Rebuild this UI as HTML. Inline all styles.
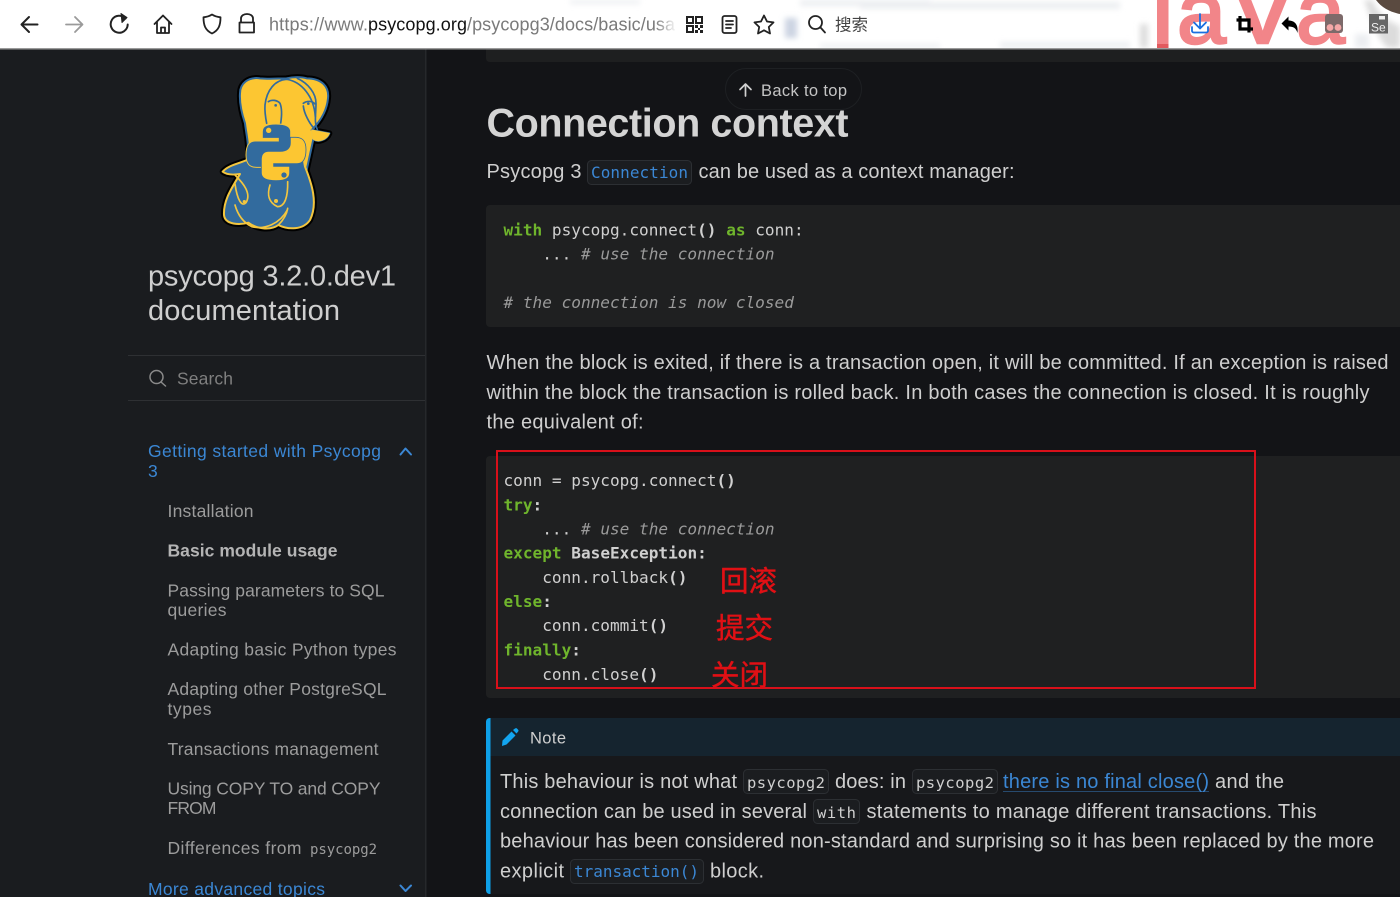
<!DOCTYPE html>
<html lang="en"><head><meta charset="utf-8"><title>Connection context</title>
<style>
html,body{margin:0;padding:0;width:1400px;height:897px;overflow:hidden;background:#131417}
svg{display:block}
text{white-space:pre;font-family:"Liberation Sans","Noto Sans CJK SC",sans-serif}
.m{font-family:"DejaVu Sans Mono",monospace;font-size:16.08px;fill:#d0d0d0}
.k{font-weight:bold;fill:#6fb52c}
.c{font-style:italic;fill:#9a9a9a}
.b{font-size:20px;fill:#cfcfcf}
.n{font-size:17.5px;fill:#9c9c9c}
.l{font-size:17.5px;fill:#3b87d4}
.r{font-size:28.5px;fill:#e01015;stroke:#e01015;stroke-width:.45}
.j{fill:#f28589;stroke:#f28589;stroke-width:2.5}
</style></head><body>
<svg xmlns="http://www.w3.org/2000/svg" width="1400" height="897" viewBox="0 0 1400 897">
<defs>
<linearGradient id="fade" x1="0" x2="1"><stop offset="0" stop-color="#fff" stop-opacity="0"/><stop offset="1" stop-color="#fff"/></linearGradient>
<filter id="bl"><feGaussianBlur stdDeviation="3"/></filter>
<clipPath id="tb"><rect width="1400" height="48"/></clipPath>
</defs>
<!-- toolbar -->
<rect width="1400" height="48" fill="#fff"/>
<g clip-path="url(#tb)">
<g filter="url(#bl)" fill="#eceef1">
<rect x="800" y="0" width="130" height="6"/><rect x="860" y="2" width="260" height="7"/><rect x="570" y="0" width="70" height="4"/><rect x="785" y="18" width="12" height="20" fill="#ccd4e2"/><rect x="1140" y="24" width="8" height="24" fill="#ddd"/><rect x="1000" y="42" width="130" height="6"/><rect x="820" y="44" width="120" height="4"/><rect x="1355" y="34" width="14" height="14"/>
</g>
<path d="M1372 0C1378 14 1388 22 1400 26V48H1388C1378 40 1372 20 1364 0Z" fill="#dcdcdc" filter="url(#bl)"/>
<path d="M1376 0C1382 8 1390 12 1400 14V0Z" fill="#5a4a40"/>
<rect x="1157" y="0" width="11.500" height="48" class="j" style="stroke:none"/>
<rect x="1157" y="44" width="11.500" height="4" fill="#e25a5e"/>
<text x="1177" y="43" font-size="88" class="j">a</text>
<text x="1228" y="43" font-size="104" class="j">V</text>
<text x="1296" y="43" font-size="88" class="j">a</text>
</g>
<rect y="48" width="1400" height="1.5" fill="#9a9a9a"/>
<!-- nav icons -->
<g fill="none" stroke="#222" stroke-width="1.8" stroke-linecap="round" stroke-linejoin="round">
<path d="M37.500 24.500H22M29 17L21.500 24.500L29 32" stroke-width="2"/>
<path d="M66 24.500H82M75 17L82.500 24.500L75 32" stroke="#9a9a9a"/>
<path d="M125.500 18.500A8.500 8.500 0 1 0 127.700 24.500" stroke-width="2"/>
<path d="M121 13.500L127 17.500L122 22.500Z" fill="#222" stroke-width="1"/>
<path d="M154.500 24L163 15.500L171.500 24M157 22V33H169V22M161 33V27.500H165V33"/>
<path d="M212 14.500C215 16.500 218 17 220.500 17.300C220.500 25 219 30 212 33.500C205 30 203.500 25 203.500 17.300C206 17 209 16.500 212 14.500Z"/>
<path d="M241 22.500V18.500C241 12.500 253 12.500 253 18.500V22.500M239.500 22.500H254V32.500H239.500Z"/>
</g>
<text x="269" y="30.500" font-size="18" fill="#7a7a7a" textLength="99">https://www.</text>
<text x="368" y="30.500" font-size="18" fill="#111" textLength="99">psycopg.org</text>
<text x="467" y="30.500" font-size="18" fill="#7a7a7a" textLength="208">/psycopg3/docs/basic/usa</text>
<rect x="655" y="10" width="22" height="30" fill="url(#fade)"/>
<rect x="677" y="10" width="78" height="30" fill="#fff"/>
<!-- QR -->
<g fill="#222">
<path d="M686 16h8v8h-8zM688 18v4h4v-4zM695 16h8v8h-8zM697 18v4h4v-4zM686 25h8v8h-8zM688 27v4h4v-4z" fill-rule="evenodd"/>
<path d="M695 25h3v3h-3zM700 25h3v3h-3zM698 28h2v2h-2zM695 30h3v3h-3zM700 30h3v3h-3z"/>
</g>
<g fill="none" stroke="#222" stroke-width="1.800" stroke-linecap="round" stroke-linejoin="round">
<rect x="722.500" y="16" width="14" height="17" rx="2"/>
<path d="M726 21H733M726 24.500H733M726 28H731"/>
<path d="M764 15.500L767 21.500L773.500 22.400L768.800 27L770 33.500L764 30.300L758 33.500L759.200 27L754.500 22.400L761 21.500Z"/>
<circle cx="815.500" cy="22.500" r="6.500"/>
<path d="M820.500 27.500L825 32.500"/>
</g>
<text x="835" y="30.500" font-size="16.500" fill="#444">搜索</text>
<!-- right icons -->
<path d="M1200 14V28M1194 22.500L1200 28.500L1206 22.500M1192 27V31C1192 32 1193 32.500 1194 32.500H1206C1207 32.500 1208 32 1208 31V27" fill="none" stroke="#1a6fe0" stroke-width="1.800" stroke-linecap="round" stroke-linejoin="round"/>
<path d="M1240 16V29H1253M1236.500 20H1249V32.500" fill="none" stroke="#000" stroke-width="3.200"/>
<path d="M1281.500 23.500L1288.500 16.500V20.500C1295 20.500 1298.500 25 1297.500 33C1296 28 1293.500 26.500 1288.500 26.500V30.500Z" fill="#000"/>
<rect x="1325" y="14" width="18" height="19" rx="3" fill="#7d6a6a"/>
<circle cx="1330" cy="27.500" r="3.400" fill="#f4a8a8"/><circle cx="1338" cy="27.500" r="3.400" fill="#f4a8a8"/>
<rect x="1369" y="14" width="19" height="19.500" fill="#666"/>
<rect x="1379" y="16" width="6" height="3.500" fill="#eee"/>
<text x="1371" y="31.500" font-size="12" fill="#eee">Se</text>
<!-- page -->
<rect y="49.500" width="1400" height="848" fill="#131417"/>
<rect y="49.500" width="425" height="848" fill="#1a1c1f"/>
<rect x="425" y="49.500" width="1.500" height="848" fill="#26282b"/>
<!-- logo -->
<g transform="translate(190 60) scale(.33333)">
<g fill="#000" stroke="#000" stroke-width="18" stroke-linejoin="round">
<path d="M150 100C150 70 175 50 210 55C240 58 265 55 290 55C310 50 335 50 350 55C395 55 418 80 414 115C410 160 385 190 365 210L418 220C410 240 385 248 370 238L350 330L175 300C175 240 170 230 165 190C155 160 148 130 150 100Z"/>
<path d="M170 300C150 310 115 315 98 335C110 345 130 345 150 342C125 385 100 420 102 465C105 495 150 495 175 488C205 510 245 510 265 495C295 510 340 510 360 480C385 430 365 370 345 320L340 290Z"/>
</g>
<path d="M150 100C150 70 175 50 210 55C240 58 265 55 290 55C310 50 335 50 350 55C395 55 418 80 414 115C410 160 385 190 365 210L418 220C410 240 385 248 370 238L350 330L175 300C175 240 170 230 165 190C155 160 148 130 150 100Z" fill="#fcc632" stroke="#326b9e" stroke-width="6" stroke-linejoin="round"/>
<path d="M170 300C150 310 115 315 98 335C110 345 130 345 150 342C125 385 100 420 102 465C105 495 150 495 175 488C205 510 245 510 265 495C295 510 340 510 360 480C385 430 365 370 345 320L340 290Z" fill="#326b9e" stroke="#f3c63f" stroke-width="6" stroke-linejoin="round"/>
<path d="M365 210L418 220C410 240 385 248 370 238C366 230 364 220 365 210Z" fill="#fcc632" stroke="#f3c63f" stroke-width="3"/>
<g fill="none" stroke="#326b9e" stroke-width="5" stroke-linecap="round" stroke-linejoin="round">
<path d="M230 190C225 165 224 150 225 135C230 90 255 60 290 58C335 65 372 110 376 170"/>
<path d="M322 55C355 70 378 100 378 130C378 160 372 190 382 208"/>
<path d="M235 125C245 118 262 120 270 130C276 145 276 165 272 190"/>
<path d="M340 130C350 122 368 122 375 132M340 138C342 160 358 190 372 205"/>
</g>
<g fill="none" stroke="#f3c63f" stroke-width="5" stroke-linecap="round" stroke-linejoin="round">
<path d="M135 345C160 370 185 400 168 428C155 442 142 420 135 372"/>
<path d="M135 435C145 470 165 490 185 500C225 510 270 490 292 450"/>
<path d="M240 375C232 400 232 425 262 440C285 440 294 410 293 365"/>
<path d="M265 495C280 480 290 465 293 445"/>
</g>
<circle cx="163" cy="425" r="5" fill="#f3c63f"/><circle cx="258" cy="423" r="6" fill="#f3c63f"/>
<circle cx="257" cy="136" r="4" fill="#326b9e"/><circle cx="355" cy="131" r="4" fill="#326b9e"/>
<path d="M258 192C225 192 217 202 217 215V235H265V243H195C175 243 168 260 168 285C168 313 180 322 200 322H215V305C215 290 225 280 245 280H280C295 280 302 270 302 255V215C302 202 290 192 258 192Z" fill="#326b9e" stroke="#f3c63f" stroke-width="3"/>
<path d="M258 192C225 192 217 202 217 215V235H265V243H195C175 243 168 260 168 285C168 313 180 322 200 322H215V305C215 290 225 280 245 280H280C295 280 302 270 302 255V215C302 202 290 192 258 192Z" fill="#fcc632" stroke="#326b9e" stroke-width="2.500" transform="rotate(180 258 277)"/>
<circle cx="236" cy="211" r="8" fill="#fcc632"/><circle cx="282" cy="345" r="8" fill="#326b9e"/>
</g>
<!-- sidebar -->
<text x="148" y="285.500" font-size="29" fill="#cfcfcf" textLength="248">psycopg 3.2.0.dev1</text>
<text x="148" y="320" font-size="29" fill="#cfcfcf" textLength="192">documentation</text>
<rect x="128" y="355" width="297" height="1" fill="#2e3033"/>
<rect x="128" y="400" width="297" height="1" fill="#2e3033"/>
<g fill="none" stroke="#8a8a8a" stroke-width="1.500" stroke-linecap="round"><circle cx="156.500" cy="377" r="6.500"/><path d="M161 382L165.500 386"/></g>
<text x="177" y="384.500" font-size="17.500" fill="#7f7f7f" textLength="56">Search</text>
<text x="148" y="457" class="l" textLength="233">Getting started with Psycopg</text>
<text x="148" y="477" class="l" textLength="10">3</text>
<path d="M400.500 454.500L405.500 448.500L411 454.500" fill="none" stroke="#3b87d4" stroke-width="2" stroke-linecap="round" stroke-linejoin="round"/>
<text x="167.500" y="517" class="n" textLength="86">Installation</text>
<text x="167.500" y="556.500" class="n" font-weight="bold" style="fill:#b4b4b4" textLength="170">Basic module usage</text>
<text x="167.500" y="596.500" class="n" textLength="217">Passing parameters to SQL</text>
<text x="167.500" y="616" class="n" textLength="59">queries</text>
<text x="167.500" y="655.500" class="n" textLength="229">Adapting basic Python types</text>
<text x="167.500" y="695" class="n" textLength="219">Adapting other PostgreSQL</text>
<text x="167.500" y="715" class="n" textLength="44">types</text>
<text x="167.500" y="755" class="n" textLength="211">Transactions management</text>
<text x="167.500" y="794.500" class="n" textLength="213">Using COPY TO and COPY</text>
<text x="167.500" y="814" class="n" textLength="49">FROM</text>
<text x="167.500" y="854" class="n" textLength="134">Differences from</text>
<text x="310" y="854" class="m" style="font-size:14px;fill:#9c9c9c" textLength="67">psycopg2</text>
<text x="148" y="895" class="l" textLength="177">More advanced topics</text>
<path d="M400.500 885.500L405.500 891L411 885.500" fill="none" stroke="#3b87d4" stroke-width="2" stroke-linecap="round" stroke-linejoin="round"/>
<!-- main -->
<path d="M486 49.500H1400V62H490C487.500 62 486 60.500 486 58Z" fill="#1e1f20"/>
<text x="486.500" y="136.500" font-size="39.500" font-weight="bold" fill="#d4d4d4" textLength="362">Connection context</text>
<rect x="725.500" y="68.500" width="136" height="41" rx="20.500" fill="none" stroke="#1e2023"/>
<path d="M745.500 96V84M740 89.500L745.500 84L751 89.500" fill="none" stroke="#d0d0d0" stroke-width="1.700" stroke-linecap="round" stroke-linejoin="round"/>
<text x="761" y="96" font-size="16.500" fill="#c4c4c4" textLength="86">Back to top</text>
<text x="486.500" y="178" class="b" textLength="95">Psycopg 3</text>
<rect x="587.500" y="160.500" width="104" height="24" rx="4" fill="#1b1d20" stroke="#2c2f33"/>
<text x="591" y="178" class="m" style="fill:#3b87d4;font-size:16px" textLength="97">Connection</text>
<text x="698.500" y="178" class="b" textLength="316">can be used as a context manager:</text>
<!-- code 1 -->
<rect x="486" y="205" width="930" height="122" rx="4" fill="#1f2021"/>
<text x="503.500" y="235.500" class="m"><tspan class="k">with</tspan> psycopg.connect<tspan font-weight="bold">()</tspan> <tspan class="k">as</tspan> conn:</text>
<text x="503.500" y="259.500" class="m">    ... <tspan class="c"># use the connection</tspan></text>
<text x="503.500" y="308" class="m c"># the connection is now closed</text>
<text x="486.500" y="369" class="b" textLength="902">When the block is exited, if there is a transaction open, it will be committed. If an exception is raised</text>
<text x="486.500" y="399" class="b" textLength="883">within the block the transaction is rolled back. In both cases the connection is closed. It is roughly</text>
<text x="486.500" y="428.500" class="b" textLength="157">the equivalent of:</text>
<!-- code 2 -->
<rect x="486" y="456" width="930" height="242" rx="4" fill="#1f2021"/>
<text x="503.500" y="486" class="m">conn = psycopg.connect<tspan font-weight="bold">()</tspan></text>
<text x="503.500" y="510.500" class="m"><tspan class="k">try</tspan><tspan font-weight="bold">:</tspan></text>
<text x="503.500" y="534.500" class="m">    ... <tspan class="c"># use the connection</tspan></text>
<text x="503.500" y="558.500" class="m"><tspan class="k">except</tspan> <tspan font-weight="bold">BaseException:</tspan></text>
<text x="503.500" y="583" class="m">    conn.rollback<tspan font-weight="bold">()</tspan></text>
<text x="503.500" y="607" class="m"><tspan class="k">else</tspan><tspan font-weight="bold">:</tspan></text>
<text x="503.500" y="631" class="m">    conn.commit<tspan font-weight="bold">()</tspan></text>
<text x="503.500" y="655.500" class="m"><tspan class="k">finally</tspan><tspan font-weight="bold">:</tspan></text>
<text x="503.500" y="680" class="m">    conn.close<tspan font-weight="bold">()</tspan></text>
<text x="720" y="591" class="r">回滚</text>
<text x="716" y="638" class="r">提交</text>
<text x="711" y="685" class="r">关闭</text>
<rect x="497" y="451" width="758" height="237" fill="none" stroke="#d8101a" stroke-width="2"/>
<!-- note -->
<rect x="486" y="718" width="930" height="176" rx="4" fill="#17181b"/>
<path d="M490 718H1400V756H490Z" fill="#15242f"/>
<path d="M490 718C487.500 718 486 719.500 486 722V890C486 892.500 487.500 894 490 894H490.500V718Z" fill="#0ea0e8"/>
<path d="M502 745L502.500 739.500L511.500 730.500L515.500 734.500L506.500 743.500ZM513 729L515 727.500C516 727 516.500 727 517.200 727.800L518 728.600C518.700 729.300 518.700 730 518 730.800L516.500 732.500Z" fill="#12a5f0" transform="translate(0 1)"/>
<text x="530" y="743.500" font-size="16.500" fill="#cfcfcf" textLength="36">Note</text>
<text x="500" y="788" class="b" textLength="237">This behaviour is not what</text>
<rect x="743.500" y="769.500" width="85" height="24" rx="4" fill="#1b1d20" stroke="#2c2f33"/>
<text x="747" y="788" class="m" style="font-size:15.500px" textLength="78">psycopg2</text>
<text x="835" y="788" class="b" textLength="71">does: in</text>
<rect x="912.500" y="769.500" width="85" height="24" rx="4" fill="#1b1d20" stroke="#2c2f33"/>
<text x="916" y="788" class="m" style="font-size:15.500px" textLength="78">psycopg2</text>
<text x="1003" y="788" class="b" style="fill:#3b87d4" textLength="206">there is no final close()</text>
<rect x="1003" y="791" width="206" height="1" fill="#3b87d4" opacity=".45"/>
<text x="1215" y="788" class="b" textLength="69">and the</text>
<text x="500" y="818" class="b" textLength="307">connection can be used in several</text>
<rect x="813.500" y="799.500" width="46" height="24" rx="4" fill="#1b1d20" stroke="#2c2f33"/>
<text x="817" y="818" class="m" style="font-size:15.500px" textLength="39">with</text>
<text x="866.500" y="818" class="b" textLength="450">statements to manage different transactions. This</text>
<text x="500" y="847.500" class="b" textLength="874">behaviour has been considered non-standard and surprising so it has been replaced by the more</text>
<text x="500" y="877.500" class="b" textLength="64">explicit</text>
<rect x="570.500" y="859.500" width="133" height="24" rx="4" fill="#1b1d20" stroke="#2c2f33"/>
<text x="574" y="877" class="m" style="fill:#3b87d4;font-size:16px" textLength="125">transaction()</text>
<text x="710" y="877.500" class="b" textLength="54">block.</text>
</svg>
</body></html>
